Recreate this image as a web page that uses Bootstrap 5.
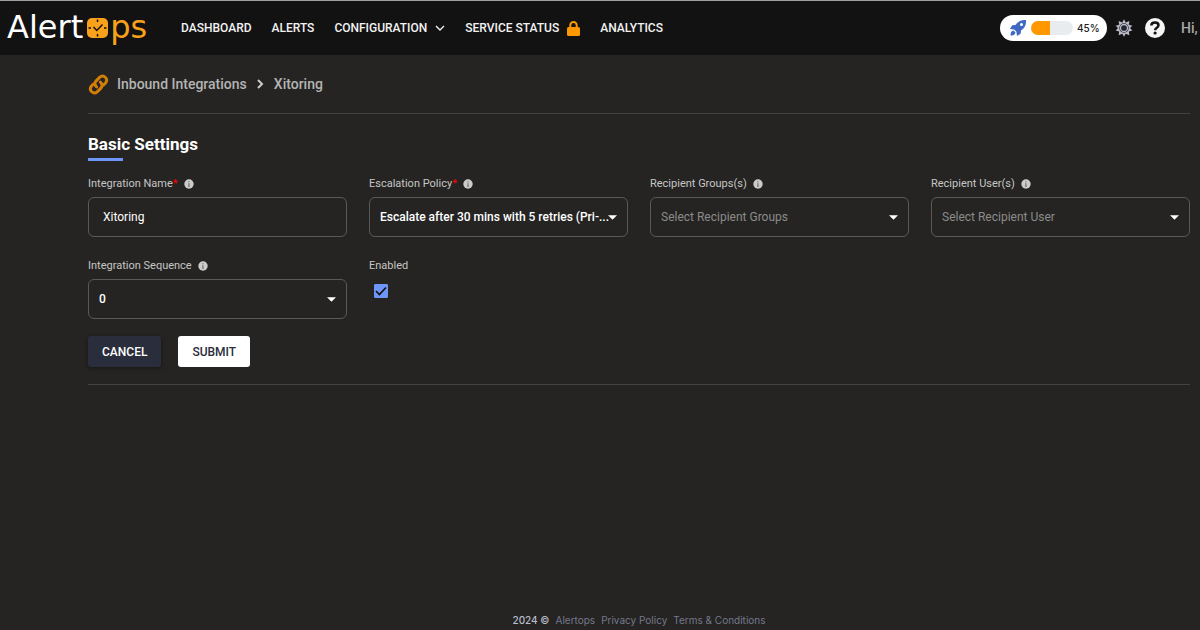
<!DOCTYPE html>
<html lang="en" data-bs-theme="dark">
<head>
<meta charset="utf-8">
<meta name="viewport" content="width=device-width, initial-scale=1">
<title>AlertOps - Inbound Integrations</title>
<link href="https://cdn.jsdelivr.net/npm/bootstrap@5.3.0/dist/css/bootstrap.min.css" rel="stylesheet">
<style>
  body { background: #252422; color: #c6c6c6; font-family: Roboto, "Liberation Sans", sans-serif; font-size: 14px; }
  .topbar { background: #121212; border-top: 1px solid #9da19f; height: 55px; padding: 0 1px 0 7px; }
  .logo { font: 32px/32px "DejaVu Sans", sans-serif; color: #fff; text-decoration: none; width: 144px; padding-bottom: 3px; }
  .logo .ops { color: #f9a11b; }
  .logo svg { margin: 3px 2px 0 4px; }
  .menu { gap: 20px; margin-left: 30px; }
  .menu .nav-link { color: #f2f2f2; font-size: 12px; font-weight: 500; line-height: 20px; padding: 0; white-space: nowrap; }
  .usage { background: #fff; color: #222; width: 107px; height: 26px; padding: 0 9px; gap: 4px; font: 500 10px/16px Inter, sans-serif; }
  .usage .progress { --bs-progress-bg: #e9ecef; --bs-progress-bar-bg: #ff9800; width: 42px; height: 14px; border-radius: 7px; }
  .icon-btn { padding: 0; border: 0; background: none; line-height: 1; }
  .greeting { color: #a9a9a9; font-size: 14px; font-weight: 500; width: 18px; margin-left: 16px; white-space: nowrap; }
  .page { padding: 0 10px 0 88px; }
  .crumbs { height: 58px; font-size: 14px; font-weight: 500; }
  .crumbs a, .crumbs span { color: #b4b4b4; text-decoration: none; }
  .rule { border-top: 1px solid #444341; opacity: 1; margin: 0; }
  .section-title { color: #fff; font-size: 17px; font-weight: 700; line-height: 24px; margin: 18px 0 0; }
  .accent { width: 35px; height: 3px; background: #6e95f8; margin-top: 2px; }
  .fields { --bs-gutter-x: 22px; --bs-gutter-y: 20px; margin-top: -6px; }
  .form-label { font-size: 11px; line-height: 18px; margin: 0 0 4px; gap: 6px; display: flex; align-items: center; }
  .form-label .req { color: #f00; }
  .form-control, .form-select { height: 40px; border: 1px solid #5a5957; border-radius: 6px; background-color: transparent; color: #fff; font-size: 12px; line-height: 20px; }
  .form-control { padding: 7px 14px; }
  .form-select { padding: 7px 18px 8px 10px; font-weight: 500; background-image: url("data:image/svg+xml,%3Csvg xmlns='http://www.w3.org/2000/svg' viewBox='0 0 10 5'%3E%3Cpath d='M0 0h10L5 5z' fill='%23fff'/%3E%3C/svg%3E"); background-size: 9px 5px; background-position: right 10px center; }
  .form-select.empty { color: #8b8b8b; font-weight: 400; }
  .form-check-input[type=checkbox] { width: 14px; height: 14px; margin: 9px 5px 0; border-radius: 1px; display: block; float: none; }
  .form-check-input:checked[type=checkbox] { background-color: #6e95f8; border-color: #6e95f8; background-size: 14px; background-image: url("data:image/svg+xml,%3Csvg xmlns='http://www.w3.org/2000/svg' viewBox='0 0 14 14'%3E%3Cpath d='M2 7l3.4 3.5L12 3.5' fill='none' stroke='%23111' stroke-width='1.7'/%3E%3C/svg%3E"); }
  .actions { gap: 17px; padding: 17px 0; }
  .actions .btn { height: 31px; padding: 0 14px; border: 0; border-radius: 3px; font-size: 12px; font-weight: 500; }
  .btn-cancel { background: #2a2d3c; color: #fff; box-shadow: 0 1px 4px #0006; }
  .btn-submit { background: #fff; color: #2a2d3c; }
  .foot { font: 10px/20px Inter, sans-serif; gap: 6px; color: #b9bccb; }
  .foot a { color: #74788d; text-decoration: none; }
</style>
</head>
<body class="d-flex flex-column min-vh-100">
<svg width="0" height="0" class="d-none" aria-hidden="true">
  <symbol id="info" viewBox="0 0 10 10"><circle cx="5" cy="5" r="4.7" fill="#ccc"/><path d="M4.300 2.200h1.300v1H4.300zM4.100 4.200h1.500v2.800h.4v.7H3.900V7h.4V5h-.2z" fill="#777"/></symbol>
</svg>
<header class="topbar d-flex align-items-center">
  <a class="logo d-flex align-items-center flex-shrink-0" href="#" aria-label="AlertOps"><span>Alert</span><svg class="flex-shrink-0" width="21" height="20" viewBox="0 0 21 20" aria-hidden="true"><rect width="21" height="20" rx="5" fill="#f9a11b"/><path d="M10.500 1.500v2.500M10.500 16v2.500M1.500 10H4M17 10h2.500M6.500 9l3.300 3.500L15.500 6.500" fill="none" stroke="#121212" stroke-width="1.500"/></svg><span class="ops">ps</span></a>
  <nav class="menu nav flex-nowrap" aria-label="Main">
    <a class="nav-link" href="#">DASHBOARD</a>
    <a class="nav-link" href="#">ALERTS</a>
    <a class="nav-link d-flex align-items-center gap-2" href="#">CONFIGURATION <svg width="10" height="7" viewBox="0 0 10 7" fill="none" stroke="#eee" stroke-width="1.400"><path d="M1 1l4 4 4-4"/></svg></a>
    <a class="nav-link d-flex align-items-center" href="#">SERVICE STATUS <svg class="ms-2" width="13" height="15" viewBox="0 0 13 15"><path d="M3.300 7V4.200a3.200 3.200 0 0 1 6.400 0V7" fill="none" stroke="#ff9800" stroke-width="2"/><rect y="6" width="13" height="9" rx="1.500" fill="#ff9800"/></svg></a>
    <a class="nav-link" href="#">ANALYTICS</a>
  </nav>
  <div class="d-flex align-items-center ms-auto flex-shrink-0">
    <div class="usage d-flex align-items-center rounded-pill">
      <svg width="18" height="18" viewBox="0 0 18 18" class="flex-shrink-0" aria-hidden="true"><path fill="#3f69c2" fill-rule="evenodd" d="M17 1c.3 5-1.300 8-5 10.500l-.4 3.300L8 17l-.6-4.200L5.200 10.600 1 10l2.200-3.700L6.500 6C9 2.300 12.500.7 17 1zM12.500 4a1.500 1.500 0 1 0 0 3 1.500 1.500 0 0 0 0-3zM4.500 11.500l2 2C6 16 4 16.500 1.500 16.500c0-2.500.5-4.600 3-5z"/></svg>
      <div class="progress flex-shrink-0" role="progressbar" aria-label="Setup progress" aria-valuenow="45" aria-valuemin="0" aria-valuemax="100"><div class="progress-bar" style="width:45%"></div></div>
      <span>45%</span>
    </div>
    <button class="icon-btn ms-2" type="button" aria-label="Settings"><svg width="18" height="18" viewBox="0 0 18 18"><path d="M9 .3l1.700 3.200 3.700-1.600-.6 3.800 3.500 1-2.300 2.300 2.300 2.600-3.500.9.600 3.700-3.700-1.500L9 17.700l-1.700-3-3.700 1.500.6-3.700-3.500-.9L3 9 .7 6.700l3.500-1-.6-3.800 3.700 1.600z" fill="#b9bbc9"/><circle cx="9" cy="9" r="4.700" fill="#121212"/><circle cx="9" cy="9" r="3.500" fill="#242631" stroke="#b9bbc9" stroke-width="1.300"/></svg></button>
    <button class="icon-btn ms-2 ps-1" type="button" aria-label="Help"><svg width="20" height="20" viewBox="0 0 20 20"><circle cx="10" cy="10" r="10" fill="#f5f5f5"/><path d="M6.300 7.500C6.400 5.300 8 4.500 10 4.500c2.100 0 3.500 1 3.500 2.800 0 2.600-3.400 2.300-3.400 4.900" fill="none" stroke="#121212" stroke-width="2.500"/><circle cx="10.100" cy="15" r="1.600" fill="#121212"/></svg></button>
    <span class="greeting">Hi,</span>
  </div>
</header>

<main class="page flex-grow-1">
  <nav class="crumbs d-flex align-items-center" aria-label="Breadcrumb">
    <svg width="21" height="21" viewBox="0 0 21 21" fill="none" stroke="#d27f08" stroke-width="3" stroke-linecap="round" aria-hidden="true"><path d="M8.600 12.900c-2.200-2-2-4.500-.5-6l3.500-3.500c4-3.600 9.200 1.400 5.900 5.600l-2 2"/><path d="M12.400 8.100c2.200 2 2 4.500.5 6l-3.500 3.500c-4 3.600-9.200-1.400-5.900-5.600l2-2"/></svg>
    <a class="ms-2" href="#">Inbound Integrations</a>
    <svg class="mx-2" width="11" height="10" viewBox="0 0 11 10" fill="none" stroke="#ccc" stroke-width="2" aria-hidden="true"><path d="M3 1l4 4-4 4"/></svg>
    <span aria-current="page">Xitoring</span>
  </nav>
  <hr class="rule">
  <h1 class="section-title">Basic Settings</h1>
  <div class="accent"></div>
  <form>
    <div class="row row-cols-4 fields">
      <div class="col">
        <label class="form-label" for="name"><span>Integration Name<span class="req">*</span></span><svg width="10" height="10"><use href="#info"/></svg></label>
        <input class="form-control" id="name" type="text" value="Xitoring">
      </div>
      <div class="col">
        <label class="form-label" for="policy"><span>Escalation Policy<span class="req">*</span></span><svg width="10" height="10"><use href="#info"/></svg></label>
        <select class="form-select" id="policy"><option>Escalate after 30 mins with 5 retries (Pri-...</option></select>
      </div>
      <div class="col">
        <label class="form-label" for="groups">Recipient Groups(s)<svg width="10" height="10"><use href="#info"/></svg></label>
        <select class="form-select empty" id="groups"><option>Select Recipient Groups</option></select>
      </div>
      <div class="col">
        <label class="form-label" for="users">Recipient User(s)<svg width="10" height="10"><use href="#info"/></svg></label>
        <select class="form-select empty" id="users"><option>Select Recipient User</option></select>
      </div>
      <div class="col">
        <label class="form-label" for="sequence">Integration Sequence<svg width="10" height="10"><use href="#info"/></svg></label>
        <select class="form-select" id="sequence"><option>0</option></select>
      </div>
      <div class="col">
        <label class="form-label" for="enabled">Enabled</label>
        <input class="form-check-input" id="enabled" type="checkbox" checked>
      </div>
    </div>
    <div class="actions d-flex">
      <button class="btn btn-cancel" type="button">CANCEL</button>
      <button class="btn btn-submit" type="submit">SUBMIT</button>
    </div>
  </form>
  <hr class="rule">
</main>

<footer class="foot page d-flex justify-content-center w-100">
  <span class="fw-medium">2024 ©</span>
  <a href="#">Alertops</a>
  <a href="#">Privacy Policy</a>
  <a href="#">Terms &amp; Conditions</a>
</footer>
<script src="https://cdn.jsdelivr.net/npm/bootstrap@5.3.0/dist/js/bootstrap.bundle.min.js"></script>
</body>
</html>
